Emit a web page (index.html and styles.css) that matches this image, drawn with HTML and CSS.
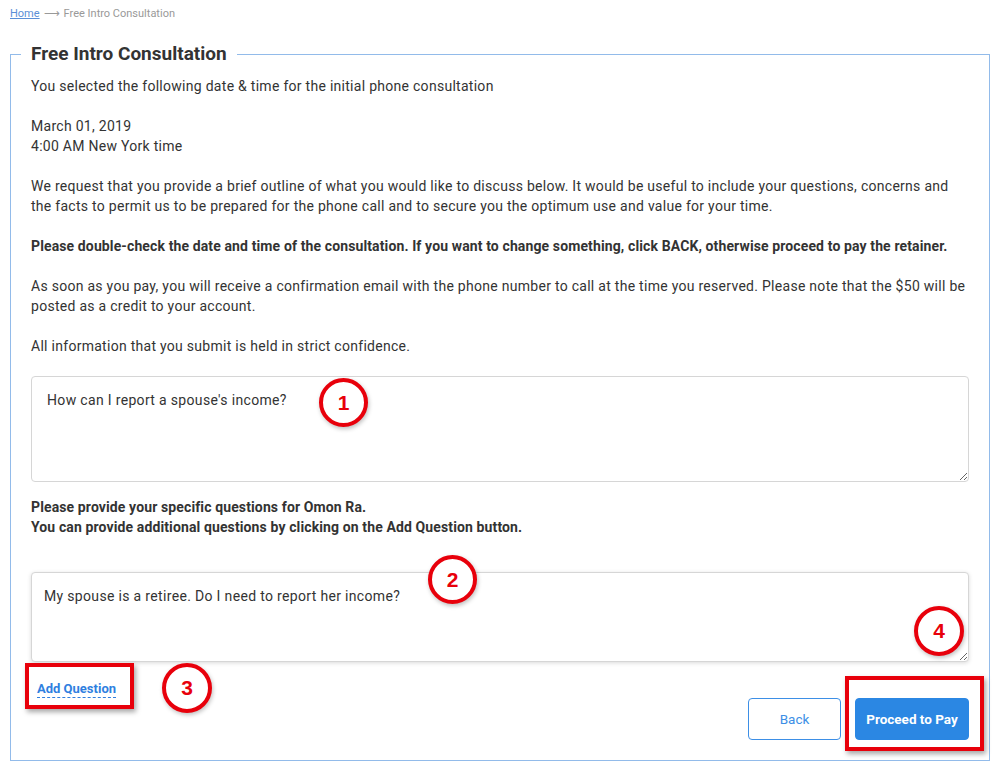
FILE: index.html
```html
<!DOCTYPE html>
<html>
<head>
<meta charset="utf-8">
<link rel="stylesheet" href="styles.css">
</head>
<body>
<div class="page">
  <nav class="crumbs"><a href="#" class="crumb-link">Home</a><span class="crumb-arrow">⟶</span><span class="crumb-current">Free Intro Consultation</span></nav>
  <fieldset class="box">
    <legend class="box-title">Free Intro Consultation</legend>
    <p class="para first">You selected the following date &amp; time for the initial phone consultation</p>
    <p class="para">March 01, 2019<br>4:00 AM New York time</p>
    <p class="para">We request that you provide a brief outline of what you would like to discuss below. It would be useful to include your questions, concerns and the facts to permit us to be prepared for the phone call and to secure you the optimum use and value for your time.</p>
    <p class="para bold">Please double-check the date and time of the consultation. If you want to change something, click BACK, otherwise proceed to pay the retainer.</p>
    <p class="para">As soon as you pay, you will receive a confirmation email with the phone number to call at the time you reserved. Please note that the $50 will be posted as a credit to your account.</p>
    <p class="para">All information that you submit is held in strict confidence.</p>
    <textarea class="area area-one">How can I report a spouse's income?</textarea>
    <p class="para bold hint">Please provide your specific questions for Omon Ra.<br>You can provide additional questions by clicking on the Add Question button.</p>
    <textarea class="area area-two">My spouse is a retiree. Do I need to report her income?</textarea>
    <div class="add-row"><a href="#" class="add-link">Add Question</a></div>
    <div class="actions">
      <button class="btn btn-back">Back</button>
      <button class="btn btn-pay">Proceed to Pay</button>
    </div>
  </fieldset>
  <div class="mark mark-1">1</div>
  <div class="mark mark-2">2</div>
  <div class="mark mark-3">3</div>
  <div class="mark mark-4">4</div>
  <div class="frame frame-add"></div>
  <div class="frame frame-pay"></div>
</div>
</body>
</html>
```
FILE: styles.css
```css
html, body {
  margin: 0;
  padding: 0;
  background: #fff;
}
body {
  font-family: Roboto, "Liberation Sans", sans-serif;
  color: #333;
  font-size: 14px;
}
.page {
  position: relative;
  width: 995px;
  height: 772px;
  padding: 7px 5px 0 10px;
  box-sizing: border-box;
}
.crumbs {
  font-size: 11px;
  line-height: 14px;
  color: #999;
  display: flex;
  align-items: center;
  gap: 4px;
}
.crumb-link {
  color: #5b8fd6;
  text-decoration: underline;
}
.crumb-arrow {
  color: #999;
  font-size: 11px;
}
.box {
  margin: 21px 0 0 0;
  border: 1px solid #92bbea;
  padding: 0 20px 20px 20px;
  min-width: 0;
  box-sizing: border-box;
}
.box-title {
  font-size: 19px;
  font-weight: bold;
  color: #333;
  padding: 0 10px;
  margin-left: -10px;
  line-height: 24px;
}
.para {
  margin: 0 0 20px 0;
  line-height: 20px;
  letter-spacing: 0.28px;
}
.bold {
  font-weight: bold;
  letter-spacing: 0.12px;
}
.first {
  margin-top: 10px;
}
.area {
  display: block;
  width: 938px;
  box-sizing: border-box;
  border: 1px solid #d6d6d6;
  border-radius: 4px;
  font-family: inherit;
  font-size: 14px;
  line-height: 20px;
  letter-spacing: 0.33px;
  color: #333;
  resize: vertical;
}
.area-one {
  height: 106px;
  padding: 13px 15px;
  margin-top: 10px;
}
.hint {
  margin-top: 15px;
  margin-bottom: 35px;
}
.area-two {
  height: 90px;
  padding: 13px 12px;
  box-shadow: 0 1px 4px rgba(0,0,0,0.15);
}
.add-row {
  margin-top: 18px;
  padding-left: 6px;
  line-height: 16px;
}
.add-link {
  color: #2f7fe0;
  font-weight: bold;
  font-size: 13px;
  text-decoration: none;
  border-bottom: 1px dashed #2f7fe0;
  padding-bottom: 1px;
}
.actions {
  display: flex;
  justify-content: flex-end;
  gap: 14px;
  margin-top: 1px;
}
.btn {
  height: 42px;
  border-radius: 4px;
  font-family: inherit;
  font-size: 13.5px;
  cursor: pointer;
}
.btn-back {
  width: 93px;
  background: #fff;
  border: 1px solid #3d8fe6;
  color: #3d8fe6;
}
.btn-pay {
  width: 114px;
  background: #2b87e3;
  border: 1px solid #2b87e3;
  color: #fff;
  font-weight: bold;
}
.mark {
  position: absolute;
  border: 4px solid #e8000b;
  border-radius: 50%;
  background: #fff;
  color: #e8000b;
  font-family: "Liberation Sans", sans-serif;
  font-weight: bold;
  font-size: 21px;
  display: flex;
  align-items: center;
  justify-content: center;
  box-sizing: border-box;
  box-shadow: 1px 2px 4px rgba(0,0,0,0.25);
}
.mark-1 { left: 319px; top: 378px; width: 49px; height: 49px; }
.mark-2 { left: 428px; top: 555px; width: 49px; height: 49px; }
.mark-3 { left: 162px; top: 663px; width: 50px; height: 50px; }
.mark-4 { left: 914px; top: 606px; width: 50px; height: 50px; }
.frame {
  position: absolute;
  border: 4px solid #e8000b;
  box-shadow: 2px 3px 5px rgba(0,0,0,0.35);
  box-sizing: border-box;
}
.frame-add { left: 25px; top: 663px; width: 109px; height: 46px; }
.frame-pay { left: 845px; top: 676px; width: 139px; height: 75px; }
```
